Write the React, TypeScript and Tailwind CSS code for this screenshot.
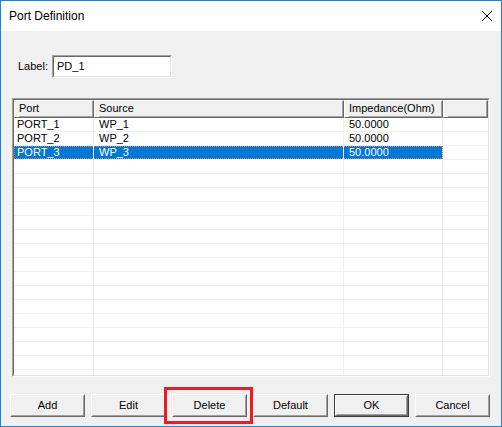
import React from 'react';

const rows = [
  { port: 'PORT_1', source: 'WP_1', imp: '50.0000' },
  { port: 'PORT_2', source: 'WP_2', imp: '50.0000' },
  { port: 'PORT_3', source: 'WP_3', imp: '50.0000', selected: true },
];

const ui = { fontFamily: '"Liberation Sans", Arial, sans-serif' };

function HeaderCell({ w, label }: { w: string; label?: string }) {
  return (
    <div
      className={`${w} h-full shrink-0 border-t border-l border-t-white border-l-white border-r border-b border-r-[#696969] border-b-[#696969] bg-[#f0f0f0] flex items-center pl-[4px]`}
    >
      <div className="h-full w-full flex items-center border-r border-b border-r-[#a0a0a0] border-b-[#a0a0a0]">
        {label}
      </div>
    </div>
  );
}

function Btn({ label, primary }: { label: string; primary?: boolean }) {
  return (
    <div
      className={`w-[75px] h-[23px] shrink-0 ${primary ? 'border border-[#3c3c3c]' : ''}`}
    >
      <div className="w-full h-full border border-t-white border-l-white border-r-[#696969] border-b-[#696969] bg-[#f0f0f0]">
        <div className="w-full h-full border border-t-[#f0f0f0] border-l-[#f0f0f0] border-r-[#a0a0a0] border-b-[#a0a0a0] flex items-center justify-center text-black">
          {label}
        </div>
      </div>
    </div>
  );
}

export default function App() {
  const filler = Array.from({ length: 20 });
  return (
    <div
      className="w-[502px] h-[427px] border border-[#1883d7] bg-[#f0f0f0] flex flex-col text-[11px] text-black overflow-hidden"
      style={ui}
    >
      {/* title bar */}
      <div className="h-[30px] bg-white flex items-center justify-between shrink-0">
        <span className="pl-[8px] text-[12px] text-black">Port Definition</span>
        <svg width="12" height="12" viewBox="0 0 12 12" className="mr-[8px]">
          <path d="M1 1L11 11M11 1L1 11" stroke="#000" strokeWidth="1" fill="none" />
        </svg>
      </div>

      {/* label */}
      <div className="mt-[24px] h-[23px] flex items-center shrink-0">
        <span className="pl-[17px] w-[51px]">Label:</span>
        <div className="w-[120px] h-[23px] border border-t-[#a0a0a0] border-l-[#a0a0a0] border-r-white border-b-white">
          <div className="w-full h-full bg-white border border-t-[#696969] border-l-[#696969] border-r-[#e3e3e3] border-b-[#e3e3e3] flex items-center pl-[3px]">
            PD_1
          </div>
        </div>
      </div>

      {/* table */}
      <div className="mt-[20px] ml-[11px] w-[478px] h-[279px] shrink-0 border border-t-[#a0a0a0] border-l-[#a0a0a0] border-r-white border-b-white">
        <div className="w-full h-full bg-white border border-t-[#696969] border-l-[#696969] border-r-[#e3e3e3] border-b-[#e3e3e3] overflow-hidden">
          <div className="flex h-[18px]">
            <HeaderCell w="w-[80px]" label="Port" />
            <HeaderCell w="w-[250px]" label="Source" />
            <HeaderCell w="w-[99px]" label="Impedance(Ohm)" />
            <HeaderCell w="w-[45px]" />
          </div>
          {rows.map((r) => (
            <div key={r.port} className="flex h-[14px] border-b border-[#f0f0f0]">
              <div
                className={`w-[429px] flex ${r.selected ? 'bg-[#0078d7] text-white outline outline-1 outline-dotted outline-[#c88a50] -outline-offset-1' : ''}`}
              >
                <div className="w-[80px] pl-[3px] flex items-center border-r border-[#f0f0f0]">{r.port}</div>
                <div className="w-[250px] pl-[5px] flex items-center border-r border-[#f0f0f0]">{r.source}</div>
                <div className="w-[99px] pl-[5px] flex items-center border-r border-[#f0f0f0]">{r.imp}</div>
              </div>
              <div className="flex-1" />
            </div>
          ))}
          {filler.map((_, i) => (
            <div key={i} className="flex h-[14px] border-b border-[#f0f0f0]">
              <div className="w-[80px] border-r border-[#f0f0f0]" />
              <div className="w-[250px] border-r border-[#f0f0f0]" />
              <div className="w-[99px] border-r border-[#f0f0f0]" />
            </div>
          ))}
        </div>
      </div>

      {/* buttons */}
      <div className="mt-[17px] ml-[9px] flex gap-[6px] shrink-0">
        <Btn label="Add" />
        <Btn label="Edit" />
        <div className="relative">
          <Btn label="Delete" />
          <div className="absolute left-[-8px] top-[-7px] w-[89px] h-[37px] border-[3px] border-[#ed1c24] pointer-events-none" />
        </div>
        <Btn label="Default" />
        <Btn label="OK" primary />
        <Btn label="Cancel" />
      </div>
    </div>
  );
}
